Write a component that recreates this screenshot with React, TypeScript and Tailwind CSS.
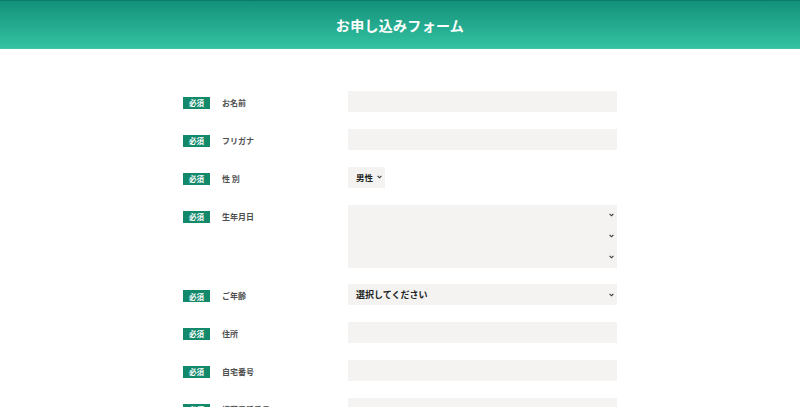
import React from "react";

const font = { fontFamily: '"Noto Sans CJK JP", "Noto Sans", sans-serif' };

function Chevron() {
  return (
    <svg width="5" height="4" viewBox="0 0 5 4" className="shrink-0">
      <path d="M0.6 0.8 L2.5 2.8 L4.4 0.8" fill="none" stroke="#333" strokeWidth="1.1" />
    </svg>
  );
}

function Label({ text }: { text: string }) {
  return (
    <div className="flex items-start pt-[6px]">
      <div className="w-[27px] h-[12px] bg-[#12896b] text-white text-[7.5px] font-bold flex items-center justify-center leading-none">
        必須
      </div>
      <div className="ml-[12px] text-[8px] leading-[12px] font-semibold text-[#505050]">{text}</div>
    </div>
  );
}

function Input() {
  return <div className="h-[21px] w-[269px] bg-[#f4f3f2]" />;
}

export default function App() {
  return (
    <div className="w-[800px] h-[407px] overflow-hidden bg-white" style={font}>
      <header className="h-[49px] border-t border-[#0e7d66] border-b border-b-[#3cc8a8] bg-gradient-to-b from-[#12917a] to-[#33c2a2] flex items-center justify-center">
        <h1 className="text-white text-[14px] font-bold tracking-[0.3px] leading-none">お申し込みフォーム</h1>
      </header>
      <div className="w-[434px] mx-auto pt-[42px] grid grid-cols-[165px_269px] gap-y-[16.85px]">
        <Label text="お名前" />
        <Input />
        <Label text="フリガナ" />
        <Input />
        <Label text="性 別" />
        <div className="h-[21px] w-[37px] bg-[#f4f3f2] flex items-center pl-[8px] pr-[3px] justify-between">
          <span className="text-[8.5px] font-bold text-[#222] leading-none">男性</span>
          <Chevron />
        </div>
        <Label text="生年月日" />
        <div className="w-[269px] bg-[#f4f3f2] flex flex-col">
          {[0, 1, 2].map((i) => (
            <div key={i} className="h-[21px] flex items-center justify-end pr-[3px]">
              <Chevron />
            </div>
          ))}
        </div>
        <Label text="ご年齢" />
        <div className="h-[21px] w-[269px] bg-[#f4f3f2] flex items-center justify-between pl-[8px] pr-[3px]">
          <span className="text-[9px] font-bold text-[#222] leading-none">選択してください</span>
          <Chevron />
        </div>
        <Label text="住所" />
        <Input />
        <Label text="自宅番号" />
        <Input />
        <Label text="携帯電話番号" />
        <Input />
      </div>
    </div>
  );
}
